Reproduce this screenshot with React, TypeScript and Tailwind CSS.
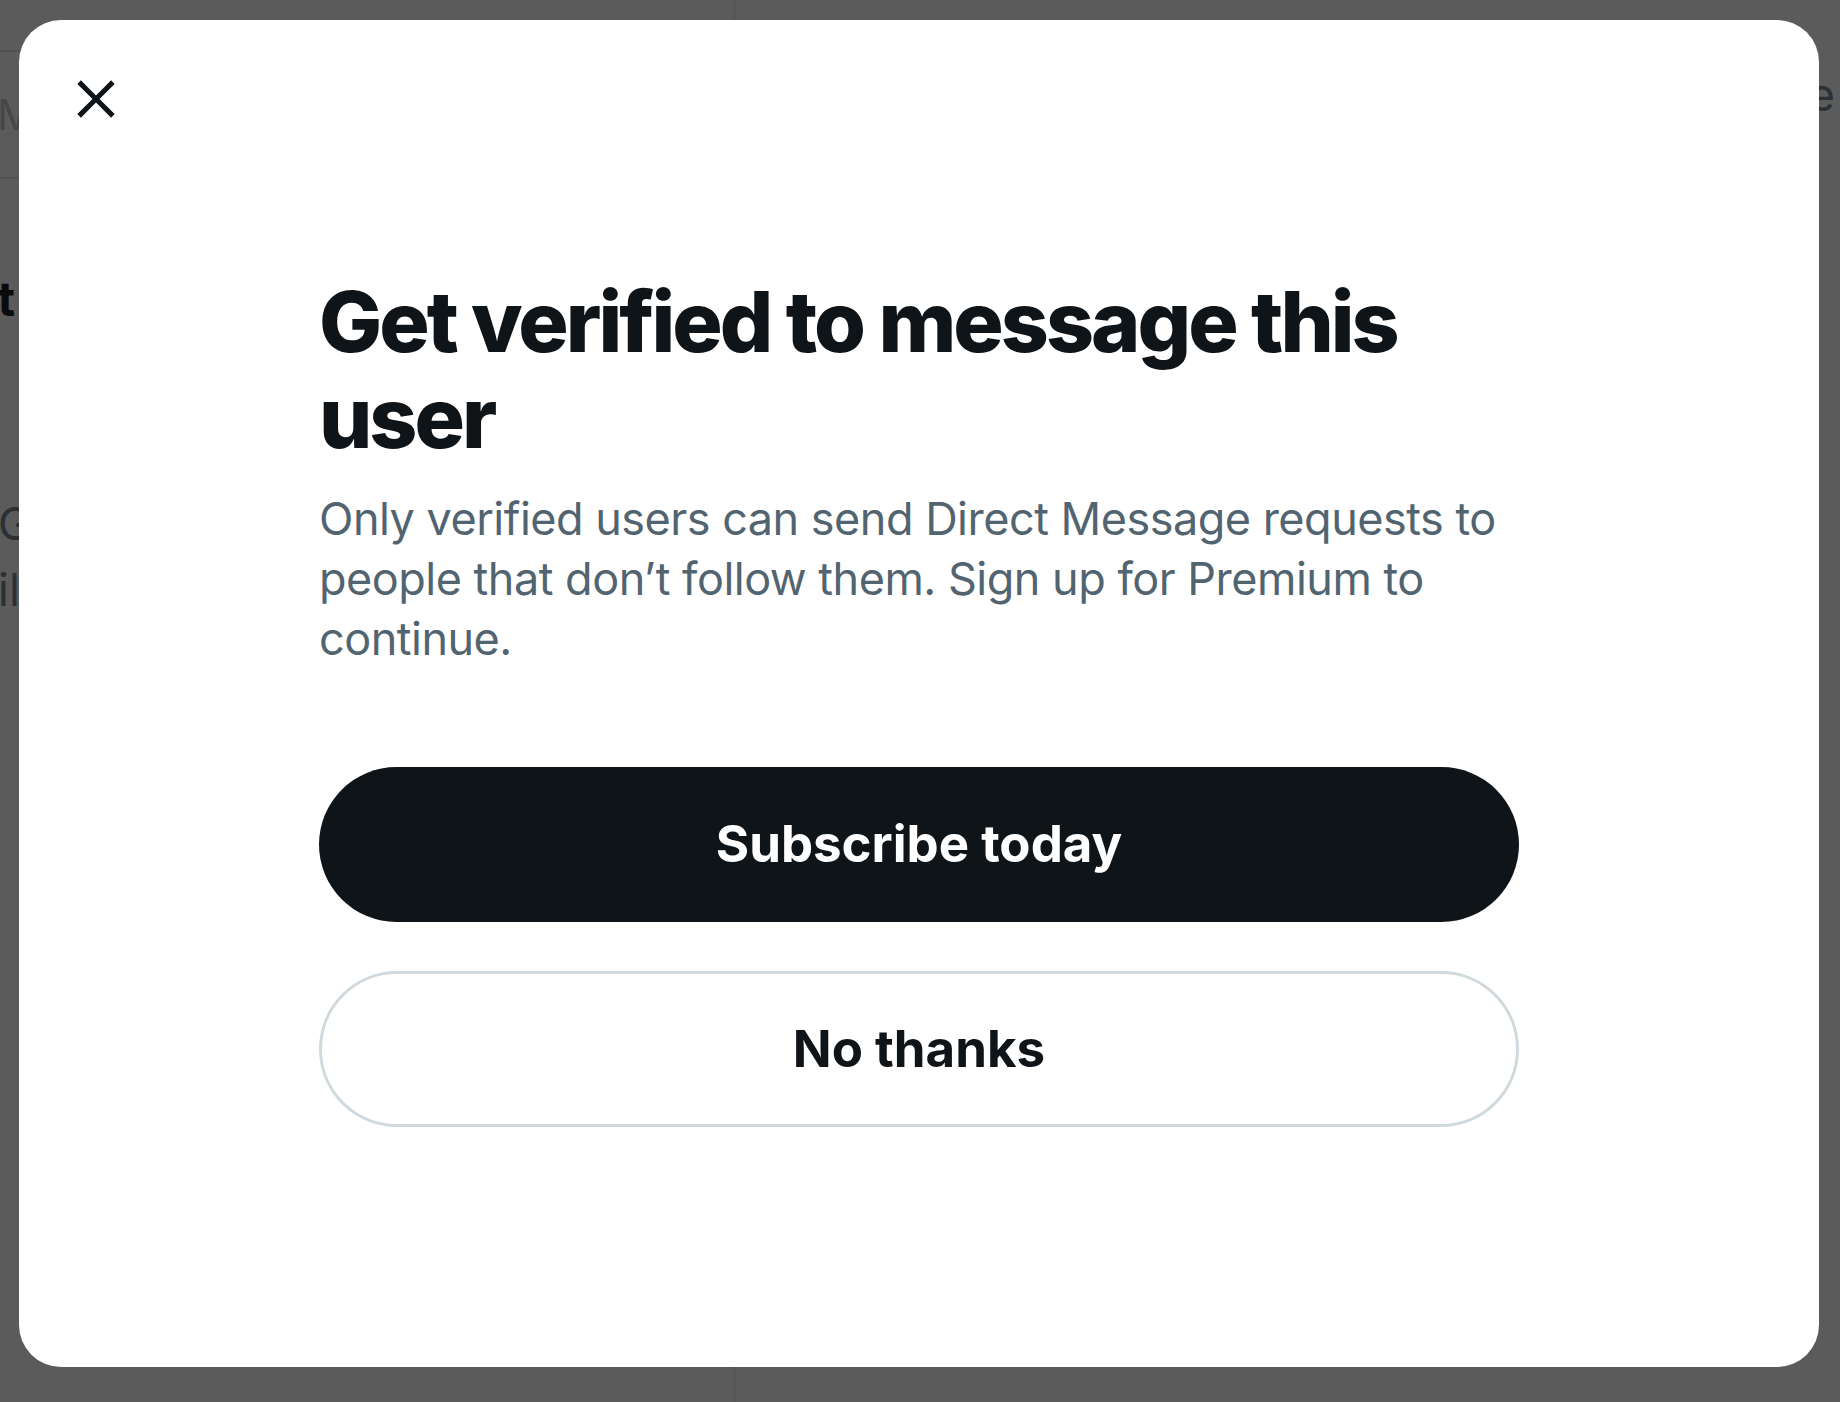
import React from 'react'

const font = { fontFamily: 'Inter, "Noto Sans", sans-serif' }

function CloseIcon() {
  return (
    <svg viewBox="0 0 24 24" className="w-[60px] h-[60px] fill-[#0f1419]">
      <path d="M10.59 12L4.54 5.96l1.42-1.42L12 10.59l6.04-6.05 1.42 1.42L13.41 12l6.05 6.04-1.42 1.42L12 13.41l-6.04 6.05-1.42-1.42L10.59 12z" />
    </svg>
  )
}

// page sitting behind the dimmed overlay
function Backdrop() {
  return (
    <div className="flex w-full h-full">
      <div className="w-[736px] shrink-0 border-r-[3px] border-[#575757] flex flex-col">
        <div className="h-[52px] border-b-2 border-[#4f5358]" />
        <div className="h-[127px] border-b-2 border-[#4f5358] flex items-center">
          <span className="-ml-[3px] text-[42px] text-[#474747] whitespace-nowrap">Message requests</span>
        </div>
        <div className="h-[96px]" />
        <div className="w-[15px] flex justify-end">
          <span className="text-[48px] font-bold text-[#0b0b0b] whitespace-nowrap leading-[48px]">Requests list</span>
        </div>
        <div className="h-[168px]" />
        <div className="text-[45px] leading-[66px] text-[#2b3035] whitespace-nowrap -ml-[2px]">
          <div>Get messages</div>
          <div>il</div>
        </div>
      </div>
      <div className="flex-1 flex flex-col">
        <div className="h-[72px]" />
        <div className="w-[1099px] flex justify-end">
          <span className="text-[45px] text-[#2b3035] whitespace-nowrap leading-[45px]">Select a message</span>
        </div>
      </div>
    </div>
  )
}

export default function App() {
  return (
    <div className="relative w-[1840px] h-[1402px] bg-[#5b5b5b] overflow-hidden" style={font}>
      <Backdrop />
      <div className="absolute left-[19px] top-[20px] w-[1800px] h-[1347px] bg-white rounded-[42px]">
        <div className="pt-[49px] pl-[47px]">
          <button className="block">
            <CloseIcon />
          </button>
        </div>
        <div className="w-[1200px] mx-auto mt-[145px]">
          <h1 className="text-[84px] leading-[96px] font-extrabold text-[#0f1419] tracking-[-3px]">
            Get verified to message this user
          </h1>
          <p className="mt-[23px] text-[45px] leading-[60px] text-[#536471] tracking-[-0.5px]">
            Only verified users can send Direct Message requests to people that don’t follow them. Sign up for Premium to continue.
          </p>
          <div className="mt-[98px] flex flex-col gap-[49px]">
            <button className="h-[155px] rounded-full bg-[#0f1419] text-white text-[51px] font-bold">
              Subscribe today
            </button>
            <button className="h-[156px] rounded-full border-[3px] border-[#cfd9de] bg-white text-[#0f1419] text-[51px] font-bold">
              No thanks
            </button>
          </div>
        </div>
      </div>
    </div>
  )
}
